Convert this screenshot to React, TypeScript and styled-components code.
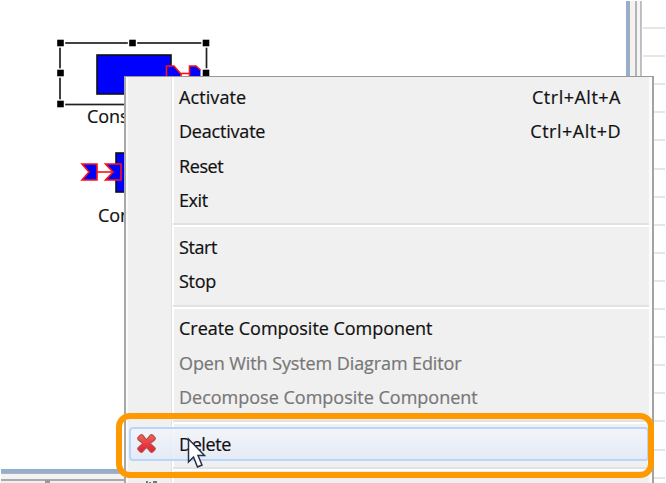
import React from "react";
import styled, { createGlobalStyle } from "styled-components";

const GlobalStyle = createGlobalStyle`
  body { margin: 0; background: #fff; }
  *, *::before { box-sizing: border-box; }
`;

const Screen = styled.div`
  position: relative;
  width: 666px;
  height: 483px;
  overflow: hidden;
  display: flex;
  background: #fff;
  font-family: "Open Sans", "Noto Sans", sans-serif;
  font-size: 18px;
  color: #111;
  -webkit-text-stroke: 0.2px currentColor;
`;

const EditorPane = styled.main`
  width: 629px;
  display: flex;
  flex-direction: column;
  padding: 1px 0 0 1px;
`;

const Canvas = styled.div`
  flex: 1;
  border-right: 3px solid #92afd1;
  border-bottom: 4px solid #92afd1;
`;

const StatusStrip = styled.div`
  height: 10px;
  border-top: 1px solid #b3b3b3;
  background:
    linear-gradient(#999, #999) 44px 6px / 5px 3px no-repeat,
    linear-gradient(#f3f3f3 5px, #aaa 5px, #aaa 7px, #f0f0f0 7px);
`;

const Sash = styled.div`
  width: 13px;
  margin-top: 1px;
  background: linear-gradient(
    90deg,
    #b0aaa5 1px, #f2f2f2 1px, #f2f2f2 6px, #b4b4b4 6px, #b4b4b4 8px,
    #f5f5f5 8px, #f5f5f5 11px, #b8b8be 11px, #c8c8ce 13px
  );
`;

const Sheet = styled.aside`
  flex: 1;
  display: flex;
  flex-direction: column;
  padding: 1px 1px 0 1px;
`;

const SheetRow = styled.div`
  flex: 0 0 28.1px;
  border-bottom: 2px solid #e6e6e6;
`;

const Diagram = styled.svg`
  position: absolute;
  left: 0;
  top: 0;
`;

const NodeLabel = styled.span<{ $x: number; $y: number }>`
  position: absolute;
  left: ${(p) => p.$x}px;
  top: ${(p) => p.$y}px;
  line-height: 24px;
  letter-spacing: -0.1px;
`;

const Menu = styled.div`
  position: absolute;
  left: 124px;
  top: 76px;
  width: 530px;
  height: 420px;
  padding: 3px 3px 0 3px;
  border: 1px solid #979797;
  border-left: 2px solid #a8a8a8;
  border-right: 2px solid #a3a3a3;
  background: linear-gradient(90deg, #fafafa 2px, #f0f0f0 2px, #f0f0f0 45px, #e2e2e2 45px, #e2e2e2 46px, #fff 46px, #fff 48px, #f0f0f0 48px, #f0f0f0 523px, #fcfcfc 523px);
`;

const Item = styled.div<{ $active?: boolean; $disabled?: boolean }>`
  display: flex;
  align-items: center;
  height: 34.33px;
  padding-right: 28px;
  color: ${(p) => (p.$disabled ? "#777" : "#111")};
  ${(p) =>
    p.$active &&
    `
    border-radius: 4px;
    background: linear-gradient(rgba(243,245,249,.9), rgba(226,233,247,.85));
    box-shadow: inset 0 0 0 2px #b7d6fb;
  `}
`;

const IconCell = styled.span`
  width: 50px;
  flex: none;
  padding-left: 7px;
  display: flex;
  align-items: center;
`;

const Label = styled.span<{ $spacing: number }>`
  flex: 1;
  white-space: nowrap;
  line-height: 24px;
  letter-spacing: ${(p) => p.$spacing}px;
`;

const Shortcut = styled.span`
  white-space: nowrap;
  letter-spacing: 0.5px;
`;

const Separator = styled.div`
  height: 12.6px;
  margin: 0 0 0 44px;
  padding-top: 6px;

  &::before {
    content: "";
    display: block;
    height: 4px;
    border-top: 2px solid #e2e2e2;
    border-bottom: 2px solid #fff;
  }
`;

const Callout = styled.div`
  position: absolute;
  left: 116px;
  top: 413px;
  width: 538px;
  height: 65px;
  border: 6px solid #ff9900;
  border-radius: 14px;
`;

const Cursor = styled.svg`
  position: absolute;
  left: 186px;
  top: 437px;
`;

const RemoveIcon = () => (
  <svg width="21" height="21" viewBox="0 0 21 21">
    <defs>
      <linearGradient id="removeFill" x1="0" y1="0" x2="0" y2="1">
        <stop offset="0" stopColor="#e8695f" />
        <stop offset="0.5" stopColor="#e93f43" />
        <stop offset="1" stopColor="#e51d34" />
      </linearGradient>
    </defs>
    <path
      d="M2 4.500 4.500 2Q5.500 1.200 6.500 2L10.500 6.800 14.500 2Q15.500 1.200 16.500 2L19 4.500Q19.600 5.500 19 6.500L14.300 10.500 19 14.800Q19.600 15.700 19 16.500L16.600 19Q15.600 19.600 14.700 19L10.500 14.300 6.300 19Q5.400 19.600 4.400 19L2 16.500Q1.400 15.700 2 14.800L6.700 10.500 2 6.500Q1.400 5.500 2 4.500Z"
      fill="url(#removeFill)"
      stroke="#bb4d4b"
      strokeWidth="1.2"
    />
  </svg>
);

const HANDLES = [[60.5, 43], [132.5, 43], [206, 43], [60.5, 73], [206, 73], [60.5, 104]];

type Entry = { label: string; spacing: number; shortcut?: string; disabled?: boolean; active?: boolean };

const GROUPS: Entry[][] = [
  [
    { label: "Activate", spacing: 0.1, shortcut: "Ctrl+Alt+A" },
    { label: "Deactivate", spacing: -0.2, shortcut: "Ctrl+Alt+D" },
    { label: "Reset", spacing: -0.4 },
    { label: "Exit", spacing: -0.4 },
  ],
  [
    { label: "Start", spacing: -0.4 },
    { label: "Stop", spacing: -0.3 },
  ],
  [
    { label: "Create Composite Component", spacing: -0.03 },
    { label: "Open With System Diagram Editor", spacing: -0.1, disabled: true },
    { label: "Decompose Composite Component", spacing: 0, disabled: true },
  ],
  [{ label: "Delete", spacing: -0.4, active: true }],
];

export default function App() {
  return (
    <>
      <GlobalStyle />
      <Screen>
        <EditorPane>
          <Canvas />
          <StatusStrip />
        </EditorPane>
        <Sash />
        <Sheet>
          {Array.from({ length: 17 }, (_, i) => (
            <SheetRow key={i} />
          ))}
        </Sheet>

        <Diagram width="220" height="220" viewBox="0 0 220 220">
          <rect x="60" y="43" width="146.5" height="61.5" fill="none" stroke="#222" strokeWidth="1.7" />
          {HANDLES.map(([x, y]) => (
            <rect key={`${x}-${y}`} x={x - 4} y={y - 4} width="8" height="8" fill="#000" stroke="#fff" strokeWidth="1.4" />
          ))}
          <rect x="97" y="55" width="74" height="39" fill="#0000ff" stroke="#111" strokeWidth="1.6" />
          <path d="M166.500 84V66H174L181 74V84Z" fill="#0000ff" stroke="#f11" strokeWidth="1.6" />
          <path d="M181 73.500H190" stroke="#f11" strokeWidth="1.6" />
          <path d="M189.500 84V66H196L200.500 70V84Z" fill="#0000ff" />
          <path d="M189.500 84V66H196L200.500 70" fill="none" stroke="#f11" strokeWidth="1.6" />
          <rect x="116" y="153" width="60" height="39" fill="#0000ff" stroke="#111" strokeWidth="1.6" />
          <path d="M82 164H97V180H82L89 172Z" fill="#0000ff" stroke="#f11" strokeWidth="1.6" />
          <path d="M105.500 164H121V180H105.500L113 172Z" fill="#0000ff" stroke="#f11" strokeWidth="1.6" />
          <path d="M97 172H113" stroke="#f11" strokeWidth="1.6" />
        </Diagram>
        <NodeLabel $x={87} $y={104}>Console</NodeLabel>
        <NodeLabel $x={98} $y={203}>Console</NodeLabel>

        <Menu>
          {GROUPS.map((group, index) => (
            <React.Fragment key={index}>
              {group.map((entry) => (
                <Item key={entry.label} $active={entry.active} $disabled={entry.disabled}>
                  <IconCell>{entry.active && <RemoveIcon />}</IconCell>
                  <Label $spacing={entry.spacing}>{entry.label}</Label>
                  {entry.shortcut && <Shortcut>{entry.shortcut}</Shortcut>}
                </Item>
              ))}
              <Separator />
            </React.Fragment>
          ))}
          <Item>
            <IconCell>
              <svg width="30" height="20" viewBox="0 0 30 20">
                <path d="M11 0v4M14 1v3M18 0v4M20 0v4" stroke="#355d50" strokeWidth="1.500" />
              </svg>
            </IconCell>
          </Item>
        </Menu>

        <Callout />
        <Cursor width="22" height="32" viewBox="0 0 22 32">
          <path d="M2.500 2V25L7.500 20L11.500 30L16 28L12 18.500H18.500Z" fill="#fff" stroke="#273044" strokeWidth="1.500" />
        </Cursor>
      </Screen>
    </>
  );
}
